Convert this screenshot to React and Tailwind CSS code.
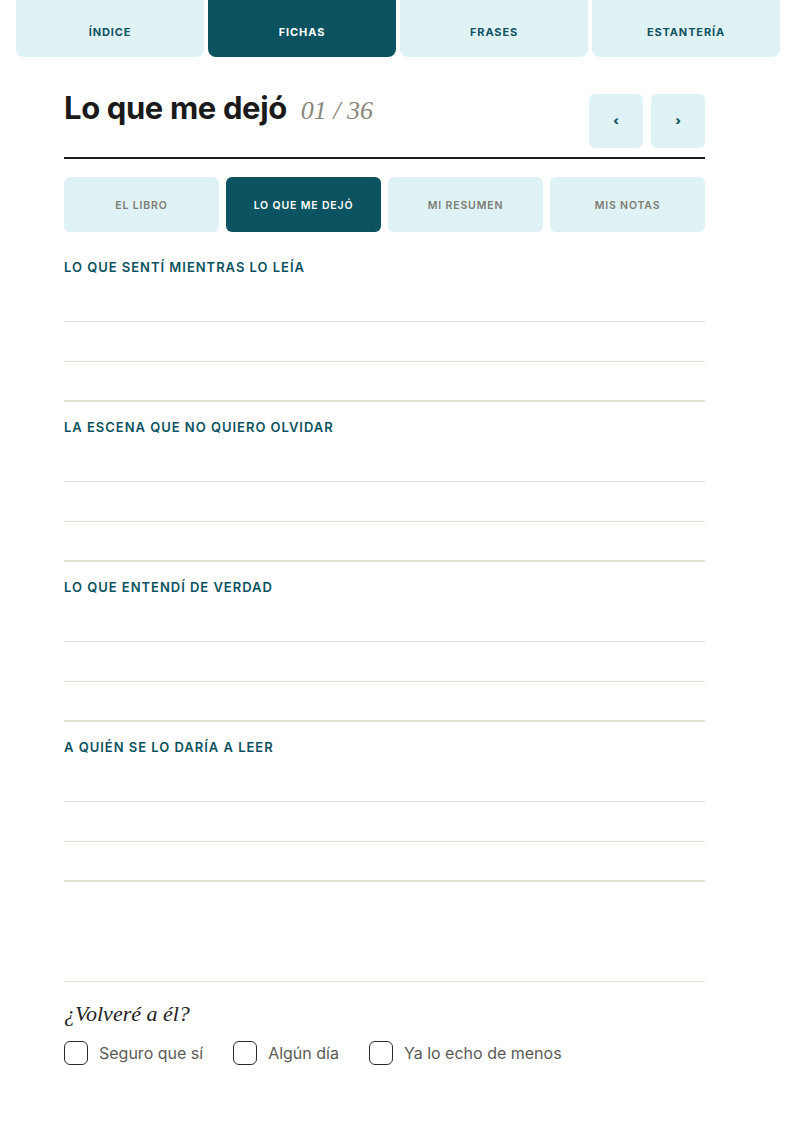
import React from "react";

const SANS = { fontFamily: "Inter, 'Noto Sans', sans-serif" };
const SERIF = { fontFamily: "'Liberation Serif', 'DejaVu Serif', serif" };

const topTabs = ["ÍNDICE", "FICHAS", "FRASES", "ESTANTERÍA"];
const subTabs = ["EL LIBRO", "LO QUE ME DEJÓ", "MI RESUMEN", "MIS NOTAS"];
const sections = [
  "LO QUE SENTÍ MIENTRAS LO LEÍA",
  "LA ESCENA QUE NO QUIERO OLVIDAR",
  "LO QUE ENTENDÍ DE VERDAD",
  "A QUIÉN SE LO DARÍA A LEER",
];
const options = ["Seguro que sí", "Algún día", "Ya lo echo de menos"];

export default function App() {
  return (
    <div className="bg-white w-full min-h-[1131px]" style={SANS}>
      <div className="ml-4 w-[764px] grid grid-cols-4 gap-[4px]">
        {topTabs.map((t, i) => (
          <div
            key={t}
            className={
              "h-[57px] rounded-b-lg flex items-center justify-center pt-[8px] text-[11px] font-bold tracking-[0.08em] " +
              (i === 1 ? "bg-[#0b5360] text-white" : "bg-[#dff2f6] text-[#0e5262]")
            }
          >
            {t}
          </div>
        ))}
      </div>

      <div className="ml-16 w-[641px] mt-[37px]">
        <div className="flex justify-between items-start pb-[9px] border-b-2 border-[#1a1a1a]">
          <div className="flex items-baseline gap-[14px] -mt-[4px]">
            <h1 className="text-[31px] leading-[36px] font-bold tracking-[-0.012em] text-[#1a1a1a]">
              Lo que me dejó
            </h1>
            <span className="text-[26px] italic text-[#8a877b]" style={SERIF}>
              01 / 36
            </span>
          </div>
          <div className="flex gap-[8px]">
            <div className="w-[54px] h-[54px] rounded-md bg-[#dff2f6] flex items-center justify-center text-[12px] font-black text-[#0b5360]">
              ‹
            </div>
            <div className="w-[54px] h-[54px] rounded-md bg-[#dff2f6] flex items-center justify-center text-[12px] font-black text-[#0b5360]">
              ›
            </div>
          </div>
        </div>

        <div className="mt-[18px] grid grid-cols-4 gap-[7px]">
          {subTabs.map((t, i) => (
            <div
              key={t}
              className={
                "h-[55px] rounded-md flex items-center justify-center pt-[2px] text-[10.5px] font-semibold tracking-[0.08em] " +
                (i === 1 ? "bg-[#0b5360] text-white" : "bg-[#dff2f6] text-[#7d7c73]")
              }
            >
              {t}
            </div>
          ))}
        </div>

        <div className="mt-[28px]">
          {sections.map((s, si) => (
            <div key={s} className={si === 0 ? "" : "mt-[18px]"}>
              <div className="text-[13px] leading-[14px] font-semibold tracking-[0.075em] text-[#0b5360]">
                {s}
              </div>
              <div className="mt-[8px]">
                <div className="h-[40px] border-b border-[#dddcd3]" />
                <div className="h-[40px] border-b border-[#e4e2d3]" />
                <div className="h-[40px] border-b-2 border-[#e4e2d3]" />
              </div>
            </div>
          ))}
          <div className="h-[100px] border-b border-[#e4e2d3]" />
        </div>

        <div className="mt-[18px] text-[22px] leading-[28px] italic text-[#222]" style={SERIF}>
          ¿Volveré a él?
        </div>
        <div className="mt-[13px] flex items-center gap-[30px]">
          {options.map((o) => (
            <div key={o} className="flex items-center gap-[11px]">
              <div className="w-[24px] h-[24px] rounded-[6px] border-[1.5px] border-[#2a2a2a]" />
              <span className="text-[16px] text-[#5a5a55]">{o}</span>
            </div>
          ))}
        </div>
      </div>
    </div>
  );
}
